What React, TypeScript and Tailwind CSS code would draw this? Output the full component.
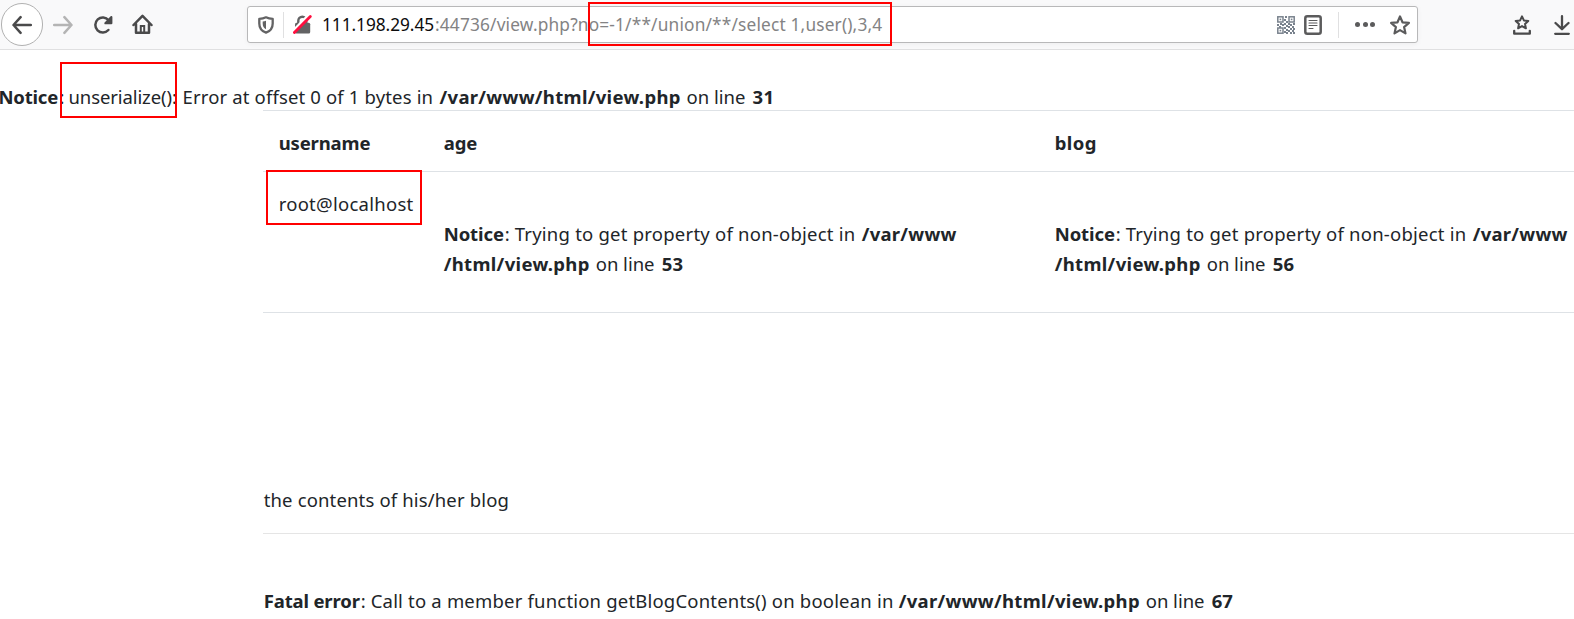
import type { ReactNode } from "react";

function BackButton() {
  return (
    <div className="flex h-[43px] w-[42px] items-center justify-center rounded-full border border-[#b1b1b1] bg-white">
      <svg className="h-5 w-5" viewBox="0 0 20 20" fill="none" stroke="#4a4a4b" strokeWidth="2.5" strokeLinecap="round" strokeLinejoin="round">
        <path d="M18.800 10H1.600M8.600 2.200L1.500 10l7.100 7.800" />
      </svg>
    </div>
  );
}

function ForwardIcon() {
  return (
    <svg className="h-5 w-5" viewBox="0 0 20 20" fill="none" stroke="#b4b4b4" strokeWidth="2.5" strokeLinecap="round" strokeLinejoin="round">
      <path d="M1.200 10h17.200M11.400 2.200l7.100 7.800-7.100 7.800" />
    </svg>
  );
}

function ReloadIcon() {
  return (
    <svg className="h-5 w-5" viewBox="0 0 20 20" fill="none">
      <path d="M15.400 15A7.500 7.500 0 1 1 15.600 5.200L17 7" stroke="#4a4a4b" strokeWidth="2.500" strokeLinecap="round" />
      <path d="M18.100 1a1.100 1.100 0 0 1 1.300 1v6.200a1.100 1.100 0 0 1-1.100 1.100h-6a1 1 0 0 1-.7-1.700l5.800-6.200z" fill="#4a4a4b" />
    </svg>
  );
}

function HomeIcon() {
  return (
    <svg className="h-[21px] w-[21px]" viewBox="0 0 21 21" fill="none" stroke="#4a4a4b" strokeWidth="2.500" strokeLinecap="round" strokeLinejoin="round">
      <path d="M1.500 11L10.500 1.800 19.500 11M4 10v8.800h13V10" />
      <path d="M8.800 18.500v-6.500h3.400v6.500" strokeWidth="2" strokeLinejoin="miter" />
    </svg>
  );
}

function ShieldIcon() {
  return (
    <svg className="h-[18px] w-4" viewBox="0 0 16 18" fill="none">
      <path d="M8 1.300c2 1 4.100 1.500 6.700 1.600v4.600c0 4.400-2 7.500-6.700 9.200C3.300 15 1.300 11.900 1.300 7.500V2.900C3.900 2.800 6 2.300 8 1.300z" stroke="#636364" strokeWidth="2.300" strokeLinejoin="round" />
      <path d="M8 4.800v8.400c-2.200-1.200-3.300-2.900-3.300-5.700V5.500C5.900 5.400 7 5.200 8 4.800z" fill="#636364" />
    </svg>
  );
}

function InsecureLockIcon() {
  return (
    <svg className="h-[19px] w-[19px]" viewBox="0 0 19 19" fill="none">
      <path d="M5.300 9V5.800a4 4 0 0 1 8 0v3" stroke="#636364" strokeWidth="2.400" />
      <rect x="2" y="7.800" width="15.200" height="10.700" rx="1.500" fill="#636364" />
      <path d="M.2 16.400L15.800.5" stroke="#fff" strokeWidth="3.600" />
      <path d="M1.400 17.500L17.300 1.500" stroke="#ff0f3f" strokeWidth="2.800" strokeLinecap="round" />
    </svg>
  );
}

const qrCells = [
  [8, 0], [7, 3], [9, 5], [7, 7], [11, 7], [3, 7], [0, 8], [5, 8], [9, 9], [13, 8], [16, 7],
  [2, 10], [7, 11], [11, 10], [15, 10], [9, 13], [13, 12], [11, 14], [15, 14], [7, 15],
  [13, 16], [9, 16], [16, 12], [16, 16],
];

function QrIcon() {
  return (
    <svg className="h-[18px] w-[18px]" viewBox="0 0 18 18" fill="none">
      <g stroke="#79828d" strokeWidth="1.500">
        <rect x=".8" y=".8" width="5.200" height="5.200" />
        <rect x="12" y=".8" width="5.200" height="5.200" />
        <rect x=".8" y="12" width="5.200" height="5.200" />
      </g>
      <g fill="#79828d">
        <rect x="2.600" y="2.600" width="1.600" height="1.600" />
        <rect x="13.800" y="2.600" width="1.600" height="1.600" />
        <rect x="2.600" y="13.800" width="1.600" height="1.600" />
        {qrCells.map(([x, y]) => (
          <rect key={`${x}-${y}`} x={x} y={y} width="2" height="2" />
        ))}
      </g>
    </svg>
  );
}

function ReaderIcon() {
  return (
    <svg className="h-5 w-[18px]" viewBox="0 0 18 20" fill="none" stroke="#5b5b5c">
      <rect x="1.300" y="1.300" width="15.400" height="17.400" rx="2" strokeWidth="2.500" />
      <path d="M5 5.500h8M5 8h8M5 10.500h8M5 13.500h4" strokeWidth="1.100" strokeLinecap="round" />
    </svg>
  );
}

function StarIcon() {
  return (
    <svg className="h-5 w-5" viewBox="0 0 20 20" fill="none" stroke="#5b5b5c" strokeWidth="2.200" strokeLinejoin="round">
      <path d="M10 1.400l2.500 5.900 6.400.6-4.800 4.200 1.400 6.300L10 15.100l-5.500 3.300 1.400-6.300L1.100 7.900l6.400-.6z" />
    </svg>
  );
}

function BookmarkTrayIcon() {
  return (
    <svg className="h-5 w-[18px]" viewBox="0 0 18 20" fill="none" stroke="#4a4a4b" strokeLinejoin="round">
      <path d="M9 1.300l1.900 4.100 4.400.5-3.300 3 .9 4.400L9 11.100l-3.900 2.200.9-4.400-3.300-3 4.400-.5z" strokeWidth="2" />
      <path d="M1.200 15.800v2.900h15.600v-2.900" strokeWidth="2.300" strokeLinecap="round" />
    </svg>
  );
}

function DownloadIcon() {
  return (
    <svg className="h-5 w-4" viewBox="0 0 16 20" fill="none" stroke="#4a4a4b" strokeWidth="2.300" strokeLinecap="round" strokeLinejoin="round">
      <path d="M8 1.200v12.600M1.500 8L8 14.200 14.500 8M1.200 18.800h13.600" />
    </svg>
  );
}

function Toolbar() {
  return (
    <header className="flex h-[50px] items-center border-b border-[#e0e0e1] bg-[#f9f9fa] pl-px">
      <BackButton />
      <div className="ml-[10px] flex items-center">
        <ForwardIcon />
        <div className="ml-5"><ReloadIcon /></div>
        <div className="ml-[19px]"><HomeIcon /></div>
      </div>
      <div className="ml-[94px] flex h-[37px] w-[1171px] items-center rounded-[3px] border border-[#b8b8b9] bg-white pl-[10px] pr-[7px] shadow-[0_1px_5px_rgba(0,0,0,0.05)]">
        <ShieldIcon />
        <div className="ml-[9px] h-[26px] w-px bg-[#e0e0e1]" />
        <div className="ml-[9px]"><InsecureLockIcon /></div>
        <div className="ml-[10px] flex grow whitespace-nowrap pt-px text-[17.3px]">
          <span className="w-[113px] tracking-[-0.05px] text-[#0c0c0d]">111.198.29.45</span>
          <span className="tracking-[0.17px] text-[#838384]">:44736/view.php?no=-1/**/union/**/select 1,user(),3,4</span>
        </div>
        <QrIcon />
        <div className="ml-[9px]"><ReaderIcon /></div>
        <div className="ml-[16px] h-[26px] w-px bg-[#e0e0e1]" />
        <div className="ml-[16px] flex gap-[2.5px]">
          <i className="h-[5px] w-[5px] rounded-full bg-[#5b5b5c]" />
          <i className="h-[5px] w-[5px] rounded-full bg-[#5b5b5c]" />
          <i className="h-[5px] w-[5px] rounded-full bg-[#5b5b5c]" />
        </div>
        <div className="ml-[15px]"><StarIcon /></div>
      </div>
      <div className="ml-[95px]"><BookmarkTrayIcon /></div>
      <div className="ml-[23px]"><DownloadIcon /></div>
    </header>
  );
}

function Line({ children }: { children: ReactNode }) {
  return <div className="flex h-[30px] whitespace-nowrap leading-[34px]">{children}</div>;
}

function PropertyNotice({ line }: { line: number }) {
  return (
    <div className="pt-[30px]">
      <Line>
        <b className="w-[61px] tracking-[-0.1px]">Notice</b>
        <span className="w-[10px]">:</span>
        <span className="w-[347px] tracking-[0.23px]">Trying to get property of non-object in</span>
        <b className="tracking-[0.27px]">/var/www</b>
      </Line>
      <Line>
        <b className="w-[152px] tracking-[0.33px]">/html/view.php</b>
        <span className="w-[66px]">on line</span>
        <b className="tracking-[0.3px]">{line}</b>
      </Line>
    </div>
  );
}

export default function App() {
  return (
    <div className="relative h-[619px] w-[1574px] overflow-hidden bg-white font-['Noto_Sans',sans-serif] text-[18.5px] text-[#212529]">
      <Toolbar />
      <main className="pt-[30px]">
        <div className="-ml-[1.5px]">
          <Line>
            <b className="w-[61px] tracking-[-0.2px]">Notice</b>
            <span className="w-[9px]">:</span>
            <span className="w-[114px] tracking-[-0.1px]">unserialize():</span>
            <span className="w-[257px] tracking-[0.15px]">Error at offset 0 of 1 bytes in</span>
            <b className="w-[247px] tracking-[0.32px]">/var/www/html/view.php</b>
            <span className="w-[66px]">on line</span>
            <b className="tracking-[0.3px]">31</b>
          </Line>
        </div>
        <div className="ml-[263px]">
          <div className="grid grid-cols-[165px_611px_1fr] border-y border-[#dee2e6] py-[15px] pl-[15.7px]">
            <Line><b className="tracking-[-0.15px]">username</b></Line>
            <Line><b className="tracking-[-0.1px]">age</b></Line>
            <Line><b className="tracking-[0.4px]">blog</b></Line>
          </div>
          <div className="grid h-[141px] grid-cols-[165px_611px_1fr] border-b border-[#dee2e6] pt-[15px] pl-[15.7px]">
            <Line><span className="tracking-[0.26px]">root@localhost</span></Line>
            <PropertyNotice line={53} />
            <PropertyNotice line={56} />
          </div>
          <div className="mt-[170px] pl-[0.7px]">
            <Line><span className="tracking-[0.15px]">the contents of his/her blog</span></Line>
          </div>
          <hr className="mt-5 border-[#e5e5e5]" />
          <div className="mt-[50px] pl-[0.7px]">
            <Line>
              <b className="w-[97px] tracking-[-0.15px]">Fatal error</b>
              <span className="w-[10px]">:</span>
              <span className="w-[528px] tracking-[0.19px]">Call to a member function getBlogContents() on boolean in</span>
              <b className="w-[247px] tracking-[0.32px]">/var/www/html/view.php</b>
              <span className="w-[66px]">on line</span>
              <b>67</b>
            </Line>
          </div>
        </div>
      </main>
      <div className="absolute left-[588px] top-[2px] h-11 w-[304px] border-2 border-[#ff0000]" />
      <div className="absolute left-[60px] top-[62px] h-14 w-[117px] border-2 border-[#ff0000]" />
      <div className="absolute left-[266px] top-[170px] h-[55px] w-[156px] border-2 border-[#ff0000]" />
    </div>
  );
}
